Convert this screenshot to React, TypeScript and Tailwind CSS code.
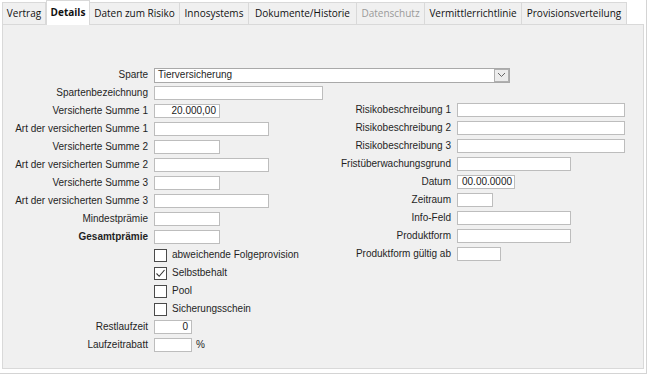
import React from "react";

const tabs: { t: string; w: string; sel?: boolean; dis?: boolean }[] = [
  { t: "Vertrag", w: "w-[44px]" },
  { t: "Details", w: "w-[44px]", sel: true },
  { t: "Daten zum Risiko", w: "w-[90px]" },
  { t: "Innosystems", w: "w-[69px]" },
  { t: "Dokumente/Historie", w: "w-[108px]" },
  { t: "Datenschutz", w: "w-[68px]", dis: true },
  { t: "Vermittlerrichtlinie", w: "w-[97px]" },
  { t: "Provisionsverteilung", w: "w-[105px]" },
];

function Box({ w, value, right }: { w: string; value?: string; right?: boolean }) {
  return (
    <div
      className={`${w} h-[14px] bg-white border border-[#bdbdbd] flex items-center ${
        right ? "justify-end pr-[3px]" : "pl-[4px]"
      } text-[10px] leading-none text-[#1a1a1a] shrink-0`}
    >
      {value}
    </div>
  );
}

function LRow({
  label,
  w,
  value,
  right,
  bold,
  suffix,
}: {
  label: string;
  w: string;
  value?: string;
  right?: boolean;
  bold?: boolean;
  suffix?: string;
}) {
  return (
    <div className="h-[18px] flex items-center">
      <div className={`w-[145px] text-right shrink-0 ${bold ? "font-bold" : ""}`}>{label}</div>
      <div className="ml-[6px] flex items-center">
        <Box w={w} value={value} right={right} />
        {suffix && <span className="ml-[4px]">{suffix}</span>}
      </div>
    </div>
  );
}

function RRow({ label, w, value }: { label: string; w: string; value?: string }) {
  return (
    <div className="h-[18px] flex items-center">
      <div className="w-[148px] text-right shrink-0">{label}</div>
      <div className="ml-[6px]">
        <Box w={w} value={value} />
      </div>
    </div>
  );
}

function Check({ label, checked }: { label: string; checked?: boolean }) {
  return (
    <div className="h-[18px] flex items-center">
      <div className="w-[145px] shrink-0" />
      <div className="ml-[6px] w-[13px] h-[13px] bg-white border border-[#4a4a4a] flex items-center justify-center shrink-0">
        {checked && (
          <svg width="11" height="11" viewBox="0 0 11 11">
            <polyline points="1.5,5.5 4.2,8.3 9.5,2" fill="none" stroke="#333" strokeWidth="1.1" />
          </svg>
        )}
      </div>
      <span className="ml-[5px]">{label}</span>
    </div>
  );
}

export default function App() {
  return (
    <div className="w-[648px] h-[377px] bg-white overflow-hidden relative">
      <div className="w-[647px] h-[374px] border-r border-b border-[#d4d4d4]">
        {/* Tabs */}
        <div
          className="h-[24px] flex items-end pl-[2px] text-[10px] text-[#111]"
          style={{ fontFamily: '"Open Sans", "Noto Sans", sans-serif' }}
        >
          {tabs.map((tab, i) =>
            tab.sel ? (
              <div
                key={i}
                className={`${tab.w} h-[25px] -mb-[1px] bg-white border border-b-0 border-[#d9d9d9] flex items-center justify-center font-bold relative z-10 pb-[1px]`}
              >
                {tab.t}
              </div>
            ) : (
              <div
                key={i}
                className={`${tab.w} h-[22px] bg-[#f0f0f0] border-t border-r border-[#d9d9d9] ${
                  i === 0 ? "border-l" : ""
                } flex items-center justify-center ${tab.dis ? "text-[#9a9a9a]" : ""}`}
              >
                {tab.t}
              </div>
            )
          )}
        </div>
        {/* Panel */}
        <div
          className="ml-[2px] w-[642px] h-[345px] bg-[#f0f0f0] border border-[#d9d9d9] pt-[41px] text-[10px] leading-none text-[#1f1f1f]"
          style={{ fontFamily: '"Liberation Sans", Arial, sans-serif' }}
        >
          {/* Sparte */}
          <div className="h-[18px] flex items-center">
            <div className="w-[145px] text-right shrink-0">Sparte</div>
            <div className="ml-[6px] w-[356px] h-[15px] bg-white border border-[#a9a9a9] flex items-center">
              <span className="pl-[3px] flex-1">Tierversicherung</span>
              <div className="w-[15px] h-[13px] bg-[#ececec] border border-[#b0b0b0] flex items-center justify-center">
                <svg width="9" height="6" viewBox="0 0 9 6">
                  <polyline points="1,1 4.5,4.5 8,1" fill="none" stroke="#666" strokeWidth="1" />
                </svg>
              </div>
            </div>
          </div>
          <LRow label="Spartenbezeichnung" w="w-[169px]" />
          <div className="flex">
            <div className="w-[300px] shrink-0">
              <LRow label="Versicherte Summe 1" w="w-[66px]" value="20.000,00" right />
              <LRow label="Art der versicherten Summe 1" w="w-[115px]" />
              <LRow label="Versicherte Summe 2" w="w-[66px]" />
              <LRow label="Art der versicherten Summe 2" w="w-[115px]" />
              <LRow label="Versicherte Summe 3" w="w-[66px]" />
              <LRow label="Art der versicherten Summe 3" w="w-[115px]" />
              <LRow label="Mindestprämie" w="w-[66px]" />
              <LRow label="Gesamtprämie" w="w-[66px]" bold />
              <Check label="abweichende Folgeprovision" />
              <Check label="Selbstbehalt" checked />
              <Check label="Pool" />
              <Check label="Sicherungsschein" />
              <LRow label="Restlaufzeit" w="w-[38px]" value="0" right />
              <LRow label="Laufzeitrabatt" w="w-[38px]" suffix="%" />
            </div>
            <div className="-mt-[1px]">
              <RRow label="Risikobeschreibung 1" w="w-[168px]" />
              <RRow label="Risikobeschreibung 2" w="w-[168px]" />
              <RRow label="Risikobeschreibung 3" w="w-[168px]" />
              <RRow label="Fristüberwachungsgrund" w="w-[114px]" />
              <RRow label="Datum" w="w-[58px]" value="00.00.0000" />
              <RRow label="Zeitraum" w="w-[36px]" />
              <RRow label="Info-Feld" w="w-[114px]" />
              <RRow label="Produktform" w="w-[114px]" />
              <RRow label="Produktform gültig ab" w="w-[44px]" />
            </div>
          </div>
        </div>
      </div>
    </div>
  );
}
